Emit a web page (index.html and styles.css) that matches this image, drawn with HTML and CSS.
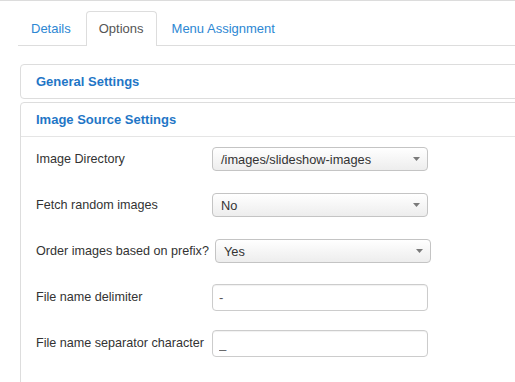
FILE: index.html
```html
<!DOCTYPE html>
<html>
<head>
<meta charset="utf-8">
<link rel="stylesheet" href="styles.css">
</head>
<body>
<div class="page">
  <ul class="tabs">
    <li class="tab">Details</li>
    <li class="tab active">Options</li>
    <li class="tab">Menu Assignment</li>
  </ul>
  <div class="panel">
    <div class="panel-head">General Settings</div>
  </div>
  <div class="panel">
    <div class="panel-head bordered">Image Source Settings</div>
    <div class="panel-body">
      <div class="row">
        <label class="label">Image Directory</label>
        <div class="select"><span>/images/slideshow-images</span><svg class="caret" width="7" height="4" viewBox="0 0 7 4"><path d="M0 0H7L3.5 4Z" fill="#7a7a7a"/></svg></div>
      </div>
      <div class="row">
        <label class="label">Fetch random images</label>
        <div class="select"><span>No</span><svg class="caret" width="7" height="4" viewBox="0 0 7 4"><path d="M0 0H7L3.5 4Z" fill="#7a7a7a"/></svg></div>
      </div>
      <div class="row">
        <label class="label">Order images based on prefix?</label>
        <div class="select"><span>Yes</span><svg class="caret" width="7" height="4" viewBox="0 0 7 4"><path d="M0 0H7L3.5 4Z" fill="#7a7a7a"/></svg></div>
      </div>
      <div class="row">
        <label class="label">File name delimiter</label>
        <input class="input" type="text" value="-">
      </div>
      <div class="row">
        <label class="label">File name separator character</label>
        <input class="input" type="text" value="_">
      </div>
    </div>
  </div>
</div>
</body>
</html>
```
FILE: styles.css
```css
html, body {
  margin: 0;
  padding: 0;
  overflow: hidden;
  background: #fff;
}
body {
  font-family: "Liberation Sans", Arial, sans-serif;
  font-size: 13px;
  color: #333;
}
.page {
  border-top: 1px solid #dcdcdc;
  padding-left: 20px;
  width: 560px;
  height: 400px;
}
.tabs {
  list-style: none;
  margin: 10px 0 0 -2px;
  padding: 0 0 0 2px;
  display: flex;
  border-bottom: 1px solid #dddddd;
}
.tab {
  padding: 0 12px;
  height: 33px;
  line-height: 34px;
  border: 1px solid transparent;
  border-bottom: none;
  border-radius: 4px 4px 0 0;
  margin-right: 2px;
  margin-bottom: -1px;
  color: #2d87d3;
  background: #fff;
}
.tab:first-child { margin-left: -2px; }
.tab.active {
  border-color: #dddddd;
  height: 34px;
  color: #555;
}
.panel {
  border: 1px solid #dddddd;
  border-radius: 4px;
  margin-bottom: 3px;
}
.panel:first-of-type { margin-top: 18px; }
.panel-head {
  height: 33px;
  line-height: 33px;
  padding-left: 15px;
  font-weight: bold;
  color: #1f76c6;
}
.panel-head.bordered {
  border-bottom: 1px solid #e5e5e5;
}
.panel-body {
  padding: 8px 0 0 15px;
  height: 300px;
}
.row {
  display: flex;
  align-items: center;
  min-height: 28px;
  margin-bottom: 18px;
}
.label {
  min-width: 170px;
  margin-right: 6px;
  white-space: nowrap;
  font-size: 12.6px;
  color: #333;
}
.select {
  box-sizing: border-box;
  width: 216px;
  height: 24px;
  border: 1px solid #c4c4c4;
  border-radius: 4px;
  background: linear-gradient(#ffffff, #ededed);
  display: flex;
  align-items: center;
  justify-content: space-between;
  padding: 0 7px 0 8px;
  font-size: 12.8px;
  color: #333;
}
.caret { display: block; }
.input {
  box-sizing: border-box;
  width: 216px;
  height: 27px;
  border: 1px solid #cccccc;
  border-radius: 4px;
  padding: 0 6px;
  font-family: "Liberation Sans", Arial, sans-serif;
  font-size: 13px;
  color: #555;
  background: #fff;
  box-shadow: inset 0 1px 1px rgba(0,0,0,0.06);
  margin: 0;
}
```
